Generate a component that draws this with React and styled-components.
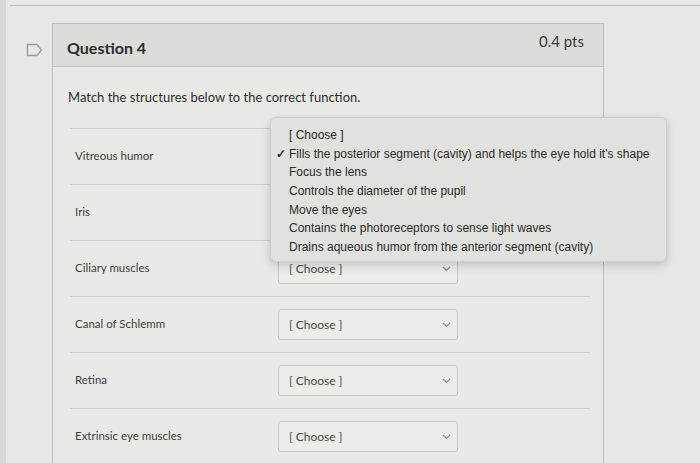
import React from "react";
import styled, { createGlobalStyle } from "styled-components";

const GlobalStyle = createGlobalStyle`
  html, body {
    margin: 0;
    padding: 0;
    background: #e7e7e5;
    font-family: Lato, "Liberation Sans", sans-serif;
    overflow: hidden;
  }
`;

const Page = styled.div`
  width: 700px;
  height: 463px;
  padding-top: 5px;
  box-sizing: border-box;
  border-left: 6px solid #d9d9d7;
`;

const TopRule = styled.div`
  margin-left: 4px;
  border-top: 1px solid #bdbdbb;
`;

const QuestionRow = styled.div`
  display: flex;
  margin-top: 17px;
`;

const FlagCol = styled.div`
  width: 46px;
  display: flex;
  justify-content: flex-end;
  padding: 20px 9px 0 0;
  box-sizing: border-box;
`;

const Card = styled.div`
  width: 552px;
  height: 440px;
  border: 1px solid #bcbcba;
  border-bottom: none;
  background: #e9e9e7;
  box-sizing: border-box;
`;

const Header = styled.div`
  height: 42px;
  display: flex;
  align-items: center;
  justify-content: space-between;
  padding: 0 19px 0 14px;
  background: #dcdcda;
  border-bottom: 1px solid #c2c2c0;
`;

const Title = styled.h2`
  margin: 4px 0 0;
  font-size: 16px;
  font-weight: 700;
  color: #2d2d2d;
`;

const Points = styled.span`
  font-size: 15px;
  color: #3a3a3a;
  margin-top: -8px;
`;

const Body = styled.div`
  padding: 22px 13px 0 17px;
`;

const Prompt = styled.p`
  margin: 0 0 23px -2px;
  font-size: 13px;
  color: #2e2e2e;
`;

const MatchRow = styled.div`
  display: flex;
  align-items: center;
  height: 55px;
  border-top: 1px solid #cdcdcb;
  padding-left: 5px;
`;

const Label = styled.div`
  width: 203px;
  font-size: 11.5px;
  color: #3e3e3e;
  margin-top: -3px;
`;

const SelectWrap = styled.div`
  position: relative;
`;

const Select = styled.div`
  width: 180px;
  height: 31px;
  box-sizing: border-box;
  border: 1px solid #c9c9c7;
  border-radius: 3px;
  background: #ececea;
  display: flex;
  align-items: center;
  justify-content: space-between;
  padding: 0 6px 0 10px;
  font-size: 12px;
  color: #4a4a4a;
  visibility: ${(p) => (p.$covered ? "hidden" : "visible")};
`;

const Menu = styled.ul`
  position: absolute;
  left: -8px;
  top: -24px;
  width: 397px;
  margin: 0;
  padding: 8px 0 4px;
  list-style: none;
  box-sizing: border-box;
  background: #e1e1df;
  border: 1px solid #cfcfcd;
  border-radius: 6px;
  box-shadow: 0 3px 10px rgba(0, 0, 0, 0.18);
  z-index: 2;
  font-family: "Liberation Sans", Arial, sans-serif;
  font-size: 12px;
  color: #2b2b2b;
`;

const Option = styled.li`
  position: relative;
  height: 18.7px;
  line-height: 18.7px;
  padding-left: 18px;
  white-space: nowrap;
`;

const Check = styled.span`
  position: absolute;
  left: 5px;
  top: 0;
  font-size: 12px;
  font-weight: 700;
`;

const Flag = () => (
  <svg width="17" height="14" viewBox="0 0 17 14">
    <path d="M1.5 1.5 H11 L15.5 7 L11 12.5 H1.5 Z" fill="none" stroke="#9a9a9a" strokeWidth="1.4" />
  </svg>
);

const Chevron = () => (
  <svg width="9" height="6" viewBox="0 0 9 6">
    <path d="M1 1 L4.5 4.5 L8 1" fill="none" stroke="#8a8a8a" strokeWidth="1.2" />
  </svg>
);

const options = [
  "[ Choose ]",
  "Fills the posterior segment (cavity) and helps the eye hold it's shape",
  "Focus the lens",
  "Controls the diameter of the pupil",
  "Move the eyes",
  "Contains the photoreceptors to sense light waves",
  "Drains aqueous humor from the anterior segment (cavity)",
];

const rows = [
  "Vitreous humor",
  "Iris",
  "Ciliary muscles",
  "Canal of Schlemm",
  "Retina",
  "Extrinsic eye muscles",
];

export default function App() {
  return (
    <Page>
      <GlobalStyle />
      <TopRule />
      <QuestionRow>
        <FlagCol>
          <Flag />
        </FlagCol>
        <Card>
          <Header>
            <Title>Question 4</Title>
            <Points>0.4 pts</Points>
          </Header>
          <Body>
            <Prompt>Match the structures below to the correct function.</Prompt>
            {rows.map((r, i) => (
              <MatchRow key={r}>
                <Label>{r}</Label>
                <SelectWrap>
                  <Select $covered={i < 2}>
                    <span>[ Choose ]</span>
                    <Chevron />
                  </Select>
                  {i === 0 && (
                    <Menu>
                      {options.map((o, j) => (
                        <Option key={o}>
                          {j === 1 && <Check>✓</Check>}
                          {o}
                        </Option>
                      ))}
                    </Menu>
                  )}
                </SelectWrap>
              </MatchRow>
            ))}
          </Body>
        </Card>
      </QuestionRow>
    </Page>
  );
}
